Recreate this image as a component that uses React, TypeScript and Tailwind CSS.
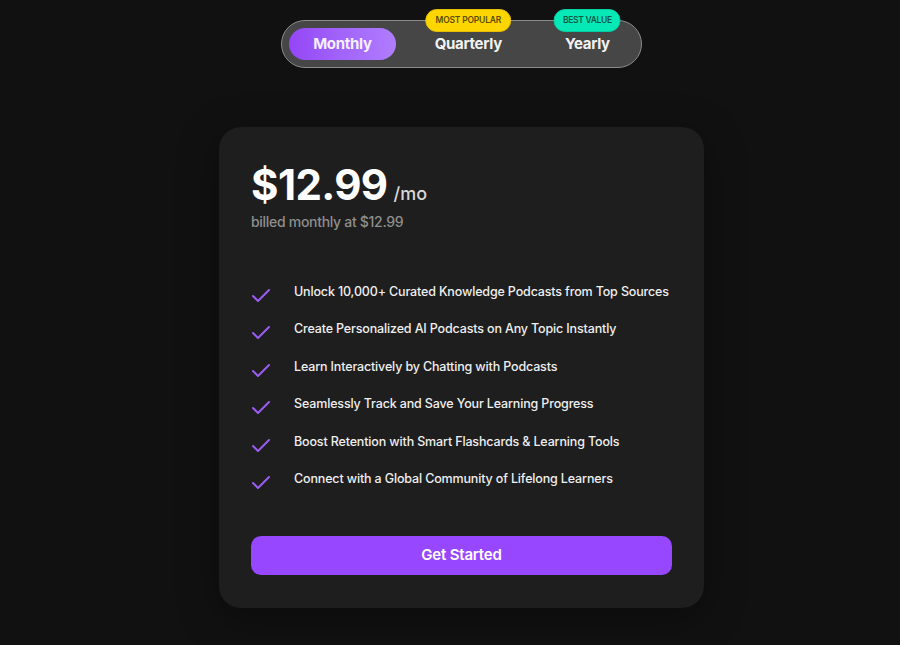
import React from "react";

const features = [
  "Unlock 10,000+ Curated Knowledge Podcasts from Top Sources",
  "Create Personalized AI Podcasts on Any Topic Instantly",
  "Learn Interactively by Chatting with Podcasts",
  "Seamlessly Track and Save Your Learning Progress",
  "Boost Retention with Smart Flashcards & Learning Tools",
  "Connect with a Global Community of Lifelong Learners",
];

function Check() {
  return (
    <svg width="24" height="24" viewBox="0 0 24 24" fill="none" stroke="#9b5cf2" strokeWidth="2" strokeLinecap="round" strokeLinejoin="round" className="shrink-0 mt-[2px]">
      <path d="M20 6 9 17l-5-5" />
    </svg>
  );
}

export default function App() {
  return (
    <div className="min-h-[645px] w-full bg-[#111111] flex flex-col items-center pl-[23px] pt-[20px] font-['Inter',sans-serif]">
      <div className="flex items-center gap-[15px] p-[7px] rounded-full bg-[#464646] border-[1.5px] border-[#8a8a8a]">
        <div className="relative">
          <div className="h-[32px] px-6 rounded-full bg-gradient-to-r from-[#9446f5] to-[#b07dfe] flex items-center text-[15px] font-bold text-[#f4f0ff] tracking-[-0.3px]">
            Monthly
          </div>
        </div>
        <div className="relative h-[32px] px-6 flex items-center text-[15px] font-bold text-[#f2f2f2] tracking-[-0.3px]">
          Quarterly
          <div className="absolute left-1/2 -translate-x-1/2 top-[-19.5px] h-[23px] px-[9px] rounded-full bg-[#fdd600] border border-[#e6c000] flex items-center text-[8.5px] font-semibold text-[#5c4c00] whitespace-nowrap tracking-[-0.2px]">
            MOST POPULAR
          </div>
        </div>
        <div className="relative h-[32px] px-6 flex items-center text-[15px] font-bold text-[#f2f2f2] tracking-[-0.3px]">
          Yearly
          <div className="absolute left-1/2 -translate-x-1/2 top-[-19.5px] h-[23px] px-[8px] rounded-full bg-[#06e8b6] border border-[#03cfa2] flex items-center text-[8.5px] font-semibold text-[#0b5a48] whitespace-nowrap tracking-[-0.3px]">
            BEST VALUE
          </div>
        </div>
      </div>

      <div className="mt-[59px] w-[485px] rounded-[22px] bg-[#1e1e1e] shadow-[0_10px_40px_rgba(0,0,0,0.35)] px-8 pt-[37px] pb-[33px]">
        <div className="flex items-baseline gap-[6px]">
          <span className="text-[42px] leading-[42px] font-bold text-white tracking-[-0.6px]">$12.99</span>
          <span className="text-[18px] font-medium text-[#d8d8d8]">/mo</span>
        </div>
        <div className="mt-[5px] text-[14px] leading-5 text-[#8e8e8e] font-medium tracking-[-0.3px]">billed monthly at $12.99</div>

        <div className="mt-[50px] flex flex-col gap-[11.4px]">
          {features.map((f) => (
            <div key={f} className="flex items-start gap-[21px] -ml-[2px]">
              <Check />
              <span className="text-[12.5px] leading-5 font-medium text-[#efefef] tracking-[-0.15px] whitespace-nowrap">{f}</span>
            </div>
          ))}
        </div>

        <button className="mt-[41px] w-full h-[39px] rounded-[10px] bg-[#9747ff] text-white text-[15px] font-semibold tracking-[-0.2px]">
          Get Started
        </button>
      </div>
    </div>
  );
}
